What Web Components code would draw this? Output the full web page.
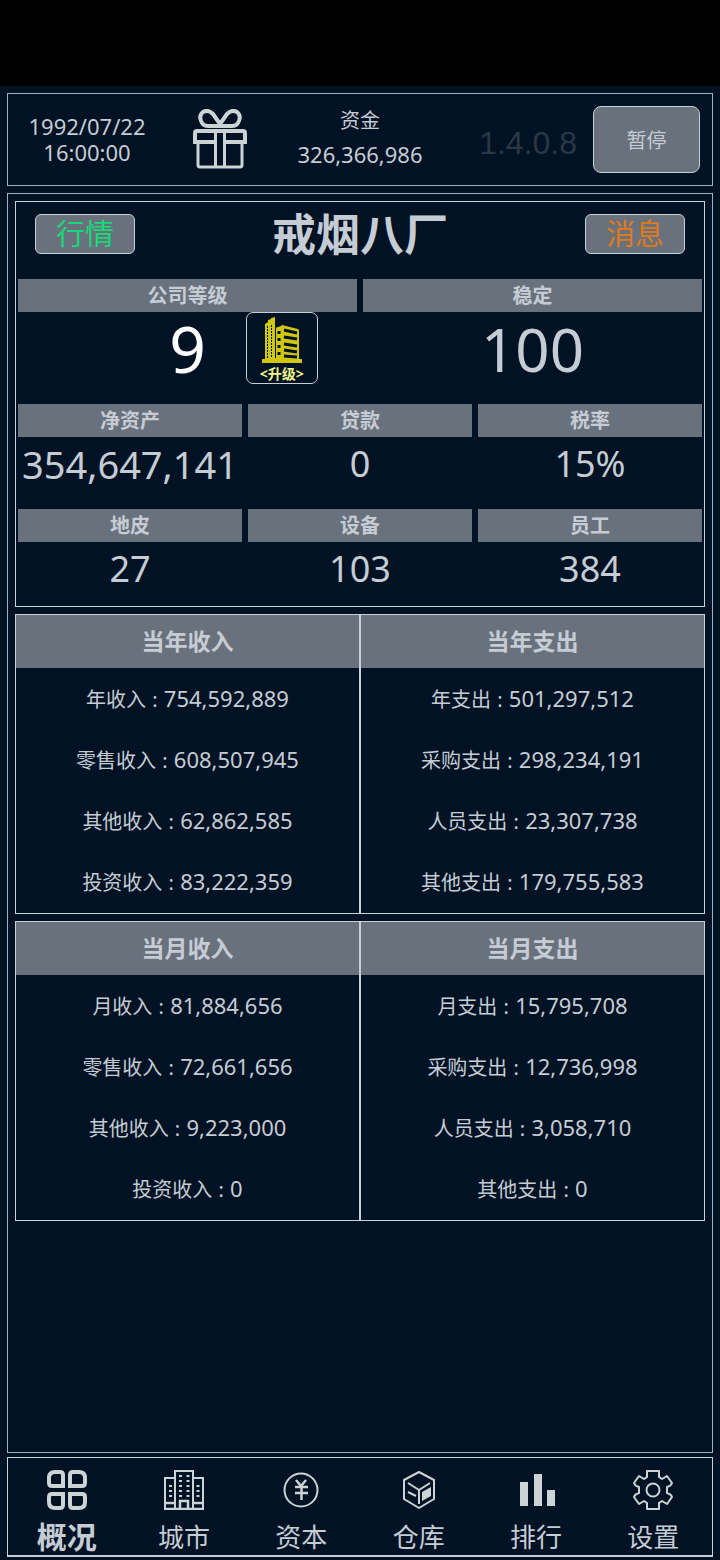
<!DOCTYPE html>
<html lang="zh-CN">
<head>
<meta charset="utf-8">
<meta name="viewport" content="width=device-width, initial-scale=1">
<title>戒烟八厂</title>
<style>
    :root {
        --bg: #001224;
        --bar: #69717d;
        --line: #a3b0bb;
        --line-strong: #c6d0d6;
        --text: #c6ccd4;
        --icon: #ccd3d5;
    }
    body {
        margin: 0;
        background: var(--bg);
        color: var(--text);
        font-family: "Noto Sans", "Noto Sans CJK SC", sans-serif;
        font-size: 22px;
    }
</style>
</head>
<body>
<game-app>
    <top-bar slot="top" date="1992/07/22" time="16:00:00" funds="326,366,986" version="1.4.0.8"></top-bar>

    <company-panel name="戒烟八厂">
        <stat-cell slot="wide" label="公司等级" size="large" highlight>9<upgrade-button slot="action"></upgrade-button></stat-cell>
        <stat-cell slot="wide" label="稳定" size="large">100</stat-cell>
        <stat-cell label="净资产" size="medium">354,647,141</stat-cell>
        <stat-cell label="贷款">0</stat-cell>
        <stat-cell label="税率">15%</stat-cell>
        <stat-cell label="地皮">27</stat-cell>
        <stat-cell label="设备">103</stat-cell>
        <stat-cell label="员工">384</stat-cell>
    </company-panel>

    <ledger-panel>
        <ledger-column heading="当年收入">
            <ledger-row label="年收入">754,592,889</ledger-row>
            <ledger-row label="零售收入">608,507,945</ledger-row>
            <ledger-row label="其他收入">62,862,585</ledger-row>
            <ledger-row label="投资收入">83,222,359</ledger-row>
        </ledger-column>
        <ledger-column heading="当年支出">
            <ledger-row label="年支出">501,297,512</ledger-row>
            <ledger-row label="采购支出">298,234,191</ledger-row>
            <ledger-row label="人员支出">23,307,738</ledger-row>
            <ledger-row label="其他支出">179,755,583</ledger-row>
        </ledger-column>
    </ledger-panel>

    <ledger-panel>
        <ledger-column heading="当月收入">
            <ledger-row label="月收入">81,884,656</ledger-row>
            <ledger-row label="零售收入">72,661,656</ledger-row>
            <ledger-row label="其他收入">9,223,000</ledger-row>
            <ledger-row label="投资收入">0</ledger-row>
        </ledger-column>
        <ledger-column heading="当月支出">
            <ledger-row label="月支出">15,795,708</ledger-row>
            <ledger-row label="采购支出">12,736,998</ledger-row>
            <ledger-row label="人员支出">3,058,710</ledger-row>
            <ledger-row label="其他支出">0</ledger-row>
        </ledger-column>
    </ledger-panel>

    <nav-bar slot="nav">
        <nav-item icon="overview" href="#overview" active>概况</nav-item>
        <nav-item icon="city" href="#city">城市</nav-item>
        <nav-item icon="capital" href="#capital">资本</nav-item>
        <nav-item icon="warehouse" href="#warehouse">仓库</nav-item>
        <nav-item icon="ranking" href="#ranking">排行</nav-item>
        <nav-item icon="settings" href="#settings">设置</nav-item>
    </nav-bar>
</game-app>

<script>
const ICONS = {
    overview: `
        <g fill="none" stroke="currentColor" stroke-width="4">
            <path d="M8 2h5q3 0 3 3v11H5q-3 0-3-3V8q0-6 6-6z"/>
            <path d="M26 2h6q6 0 6 6v5q0 3-3 3H23V5q0-3 3-3z"/>
            <path d="M5 24h11v11q0 3-3 3H8q-6 0-6-6v-5q0-3 3-3z"/>
            <path d="M23 24h12q3 0 3 3v5q0 6-6 6h-6q-3 0-3-3z"/>
        </g>`,
    city: `
        <g fill="none" stroke="currentColor" stroke-width="2">
            <path d="M1 39V8h10M11 39V1h18v38M29 8h10v31"/>
            <path d="M0 39h40M0 33h11M29 33h11M16 39v-8h8v8" stroke-width="2.500"/>
        </g>
        <g stroke="currentColor" stroke-width="3" stroke-dasharray="2 3">
            <path d="M16.500 5v22M24 5v22M6.500 15v14M34 15v14"/>
        </g>`,
    capital: `
        <g fill="none" stroke="currentColor">
            <circle cx="20" cy="20" r="16.500" stroke-width="2"/>
            <path d="M15 10l5 6 5-6M14 17h13M14 23h13M20.500 16v14" stroke-width="2.500"/>
        </g>`,
    warehouse: `
        <g fill="none" stroke="currentColor" stroke-width="2" stroke-linejoin="round">
            <path d="M20 2l15 8v19l-15 9-15-9V10z"/>
            <path d="M9 13l11 7 11-7M20 20v14M9 22l8 4"/>
        </g>
        <path d="M23 22l9-5v9l-9 5z" fill="currentColor"/>`,
    ranking: `
        <path d="M4 12h8v24H4zM18 4h8v32h-8zM31 20h8v16h-8z" fill="currentColor"/>`,
    settings: `
        <g fill="none" stroke="currentColor" stroke-width="2" stroke-linejoin="round">
            <path d="M14 1h12v6l3 2 5-3 5 7q-1 3-5 4v6q4 1 5 4l-5 7-5-3-3 2v6H14v-6l-3-2-5 3-5-7q1-3 5-4v-6q-4-1-5-4l5-7 5 3 3-2z"/>
            <circle cx="20" cy="20" r="6.500"/>
        </g>`
};

// Shared base: clones the markup into an open shadow root.
class BaseElement extends HTMLElement {
    constructor() {
        super();
        this.attachShadow({ mode: 'open' });
    }

    connectedCallback() {
        const template = document.createElement('template');
        template.innerHTML = this.render();
        this.shadowRoot.replaceChildren(template.content.cloneNode(true));
    }

    attr(name) {
        return this.getAttribute(name) || '';
    }
}

class GameApp extends BaseElement {
    render() {
        return `
            <style>
                :host {
                    display: flex;
                    flex-direction: column;
                    box-sizing: border-box;
                    min-height: 100vh;
                    padding: 0 7px 3px;
                }
                .notch {
                    height: 86px;
                    margin: 0 -7px 7px;
                    background: #000;
                }
                main {
                    flex: 1;
                    display: flex;
                    flex-direction: column;
                    gap: 7px;
                    margin: 7px 0 4px;
                    padding: 7px;
                    border: 1px solid var(--line);
                }
            </style>
            <div class="notch"></div>
            <slot name="top"></slot>
            <main><slot></slot></main>
            <slot name="nav"></slot>
        `;
    }
}

class TopBar extends BaseElement {
    render() {
        return `
            <style>
                :host { display: block; }
                header {
                    display: grid;
                    grid-template-columns: 158fr 108fr 172fr 147fr 107fr;
                    align-items: center;
                    padding: 9px 12px 10px 0;
                    border: 1px solid var(--line);
                    text-align: center;
                }
                .clock { line-height: 26px; }
                .funds { margin-bottom: 4px; }
                .gift {
                    justify-self: center;
                    padding: 0;
                    border: 0;
                    background: none;
                    color: var(--icon);
                }
                svg { display: block; width: 54px; height: 60px; }
                .funds {
                    display: grid;
                    grid-template-rows: repeat(2, 34px);
                    line-height: 34px;
                }
                .funds .caption {
                    font-family: "Noto Sans CJK SC", sans-serif;
                    font-size: 20px;
                }
                .version {
                    padding: 8px 16px 0 0;
                    font-family: "Liberation Sans", sans-serif;
                    font-size: 32px;
                    text-align: right;
                    color: #2a3745;
                }
                .pause {
                    height: 67px;
                    border: 1px solid var(--line-strong);
                    border-radius: 8px;
                    background: var(--bar);
                    color: var(--text);
                    font: inherit;
                    font-size: 20px;
                }
            </style>
            <header>
                <time class="clock">${this.attr('date')}<br>${this.attr('time')}</time>
                <button class="gift" type="button" aria-label="礼物">
                    <svg viewBox="0 0 54 60" fill="none" stroke="currentColor" stroke-width="3">
                        <path d="M27 15L20 5Q15 0 10 3 5 7 9 14 11 17 15 17h24q4 0 6-3 4-7-1-11-5-3-10 2z" stroke-width="4" stroke-linejoin="round"/>
                        <path d="M4 22h46q2 0 2 2v9H32M22 33H2v-9q0-2 2-2" stroke-width="4"/>
                        <path d="M5 33v23q0 2 2 2h40q2 0 2-2V33M22.500 22v36M31.500 22v36"/>
                    </svg>
                </button>
                <div class="funds"><span class="caption">资金</span><span>${this.attr('funds')}</span></div>
                <div class="version">${this.attr('version')}</div>
                <button class="pause" type="button">暂停</button>
            </header>
        `;
    }
}

class CompanyPanel extends BaseElement {
    render() {
        return `
            <style>
                :host {
                    display: block;
                    padding: 0 2px;
                    border: 1px solid var(--line-strong);
                }
                header {
                    display: flex;
                    align-items: center;
                    justify-content: space-between;
                    padding: 12px 17px 25px;
                }
                button {
                    width: 100px;
                    height: 40px;
                    padding: 0;
                    border: 1px solid var(--line-strong);
                    border-radius: 6px;
                    background: var(--bar);
                    font: inherit;
                    font-size: 29px;
                    line-height: 38px;
                }
                .market { color: #17d978; }
                .news { color: #df7a1c; }
                h1 {
                    margin: 0;
                    font-size: 44px;
                    line-height: 40px;
                }
                .grid { display: grid; gap: 8px 6px; }
                .two { grid-template-columns: repeat(2, 1fr); }
                .three { grid-template-columns: repeat(3, 1fr); }
            </style>
            <header>
                <button class="market" type="button">行情</button>
                <h1>${this.attr('name')}</h1>
                <button class="news" type="button">消息</button>
            </header>
            <div class="grid two"><slot name="wide"></slot></div>
            <div class="grid three"><slot></slot></div>
        `;
    }
}

class StatCell extends BaseElement {
    render() {
        return `
            <style>
                :host { display: block; min-width: 0; }
                .label {
                    background: var(--bar);
                    font-size: 20px;
                    font-weight: bold;
                    line-height: 33px;
                    text-align: center;
                }
                .value {
                    display: grid;
                    grid-template-columns: 1fr auto 1fr;
                    column-gap: 40px;
                    height: 64px;
                    font-size: 36px;
                    line-height: 54px;
                }
                .number { grid-column: 2; }
                :host([size="medium"]) .value { font-size: 38px; column-gap: 0; }
                :host([size="large"]) .value {
                    height: 92px;
                    font-size: 60px;
                    line-height: 74px;
                }
                :host([highlight]) .value { font-size: 64px; color: #fff; }
            </style>
            <div class="label">${this.attr('label')}</div>
            <div class="value"><span class="number"><slot></slot></span><slot name="action"></slot></div>
        `;
    }
}

class UpgradeButton extends BaseElement {
    render() {
        return `
            <style>
                :host { display: block; }
                button {
                    display: flex;
                    flex-direction: column;
                    align-items: center;
                    width: 72px;
                    height: 72px;
                    padding: 3px 0 0;
                    border: 1px solid var(--line-strong);
                    border-radius: 7px;
                    background: var(--bg);
                    color: #f1f58c;
                    font: inherit;
                    font-size: 14px;
                    font-weight: bold;
                    line-height: 22px;
                }
                svg { width: 40px; height: 47px; flex: none; }
            </style>
            <button type="button">
                <svg viewBox="0 0 40 47">
                    <g fill="#d0c60c">
                        <path d="M0 43h40v4H0z"/>
                        <path d="M3 43V8l3-2V4l3-1V2l4-1v42z"/>
                        <path d="M13 43V12l6-2 1-1 16 4 1 1v29z"/>
                    </g>
                    <g stroke="#001224" fill="none">
                        <path d="M5.500 10v32M9.500 9v33" stroke-dasharray="2 1"/>
                        <path d="M13.500 12v30" />
                        <path d="M17 15v28" stroke-width="3" stroke-dasharray="3 4"/>
                        <path d="M22 14l13 3M22 21l13 2M22 28l13 2M22 34l13 2M22 40l13 1" stroke-width="3"/>
                    </g>
                </svg>
                &lt;升级&gt;
            </button>
        `;
    }
}

class LedgerPanel extends BaseElement {
    render() {
        return `
            <style>
                :host {
                    display: grid;
                    grid-template-columns: repeat(2, 1fr);
                    column-gap: 2px;
                    border: 1px solid var(--line-strong);
                    background: var(--line-strong);
                }
            </style>
            <slot></slot>
        `;
    }
}

class LedgerColumn extends BaseElement {
    render() {
        return `
            <style>
                :host { display: block; background: var(--bg); }
                h2 {
                    margin: 0;
                    background: var(--bar);
                    font-size: 23px;
                    line-height: 53px;
                    text-align: center;
                }
                .rows {
                    display: grid;
                    grid-auto-rows: 1fr;
                    height: 245px;
                }
            </style>
            <h2>${this.attr('heading')}</h2>
            <div class="rows"><slot></slot></div>
        `;
    }
}

class LedgerRow extends BaseElement {
    render() {
        return `
            <style>
                :host {
                    display: flex;
                    align-items: center;
                    justify-content: center;
                    line-height: 30px;
                }
                .label { font-size: 20px; }
                .colon { padding: 0 1px; }
            </style>
            <div><span class="label">${this.attr('label')}<span class="colon"> : </span></span><slot></slot></div>
        `;
    }
}

class NavBar extends BaseElement {
    render() {
        return `
            <style>
                :host { display: block; }
                nav {
                    display: grid;
                    grid-template-columns: repeat(6, 1fr);
                    border: 1px solid var(--line-strong);
                    border-bottom-width: 2px;
                }
            </style>
            <nav><slot></slot></nav>
        `;
    }
}

class NavItem extends BaseElement {
    render() {
        return `
            <style>
                :host { display: block; }
                a {
                    display: flex;
                    flex-direction: column;
                    align-items: center;
                    gap: 9px;
                    padding: 12px 0 0;
                    color: inherit;
                    font-size: 26px;
                    line-height: 36px;
                    text-decoration: none;
                }
                svg { width: 40px; height: 40px; color: var(--icon); }
                :host([active]) a { font-size: 30px; font-weight: bold; }
            </style>
            <a href="${this.attr('href')}">
                <svg viewBox="0 0 40 40">${ICONS[this.attr('icon')]}</svg>
                <span><slot></slot></span>
            </a>
        `;
    }
}

customElements.define('game-app', GameApp);
customElements.define('top-bar', TopBar);
customElements.define('company-panel', CompanyPanel);
customElements.define('stat-cell', StatCell);
customElements.define('upgrade-button', UpgradeButton);
customElements.define('ledger-panel', LedgerPanel);
customElements.define('ledger-column', LedgerColumn);
customElements.define('ledger-row', LedgerRow);
customElements.define('nav-bar', NavBar);
customElements.define('nav-item', NavItem);
</script>
</body>
</html>
